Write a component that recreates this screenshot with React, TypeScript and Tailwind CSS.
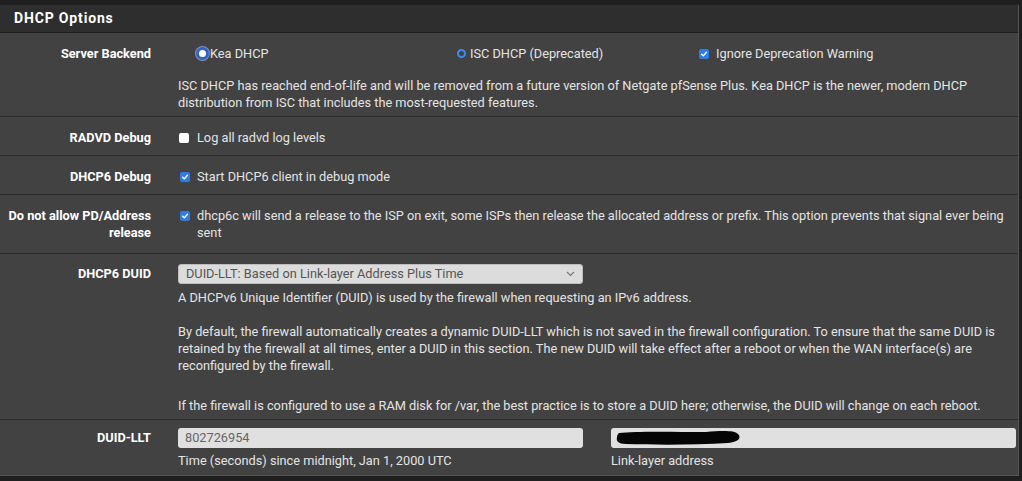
import React from "react";

function Checkbox({ checked }: { checked: boolean }) {
  if (!checked) {
    return <span className="inline-block w-[10px] h-[10px] rounded-[2px] bg-white shrink-0" />;
  }
  return (
    <span className="inline-flex items-center justify-center w-[10px] h-[10px] rounded-[2px] bg-[#2f7de1] shrink-0">
      <svg width="8" height="8" viewBox="0 0 10 10">
        <path d="M2 5.2 L4.2 7.3 L8 2.8" fill="none" stroke="white" strokeWidth="1.7" strokeLinecap="round" strokeLinejoin="round" />
      </svg>
    </span>
  );
}

function Row({ label, children, className }: { label: React.ReactNode; children: React.ReactNode; className: string }) {
  return (
    <div className={`grid grid-cols-[164px_1fr] border-b border-[#2c2c2c] ${className}`}>
      <div className="pr-[13px] text-right font-bold text-white leading-[17px]">{label}</div>
      <div className="pl-[14px] pr-[5px]">{children}</div>
    </div>
  );
}

export default function App() {
  return (
    <div className="w-[1022px] h-[481px] bg-[#1f1f1f] pt-[5px] overflow-hidden" style={{ fontFamily: "Roboto, 'Liberation Sans', sans-serif" }}>
      <div className="w-[1019px] bg-[#424242] border-r border-b border-[#555] text-[12.75px] text-[#e4e4e4]">
        {/* Heading */}
        <div className="h-[28px] bg-[#2e2e2e] border-b border-[#1e1e1e] flex items-center pl-[14px]">
          <span className="text-[14px] font-bold text-white tracking-[0.06em]">DHCP Options</span>
        </div>

        {/* Server Backend */}
        <Row label="Server Backend" className="pt-[12px] pb-[5px]">
          <div className="h-[17px] flex items-center">
            <div className="w-[279px] flex items-center">
              <span className="ml-[18px] w-[13px] h-[13px] rounded-full bg-white border-[3px] border-[#3a63b8] shadow-[0_0_0_1px_#7a93c9]" />
              <span className="ml-[1px]">Kea DHCP</span>
            </div>
            <div className="w-[242px] flex items-center">
              <span className="w-[9px] h-[9px] rounded-full border-[2px] border-[#3d8bf0]" />
              <span className="ml-[4px]">ISC DHCP (Deprecated)</span>
            </div>
            <div className="flex items-center">
              <Checkbox checked />
              <span className="ml-[7px]">Ignore Deprecation Warning</span>
            </div>
          </div>
          <p className="mt-[15px] leading-[17px]">
            ISC DHCP has reached end-of-life and will be removed from a future version of Netgate pfSense Plus. Kea DHCP is the newer, modern DHCP
            <br />
            distribution from ISC that includes the most-requested features.
          </p>
        </Row>

        {/* RADVD Debug */}
        <Row label="RADVD Debug" className="pt-[12px] pb-[9px]">
          <div className="h-[17px] flex items-center pl-[1px]">
            <Checkbox checked={false} />
            <span className="ml-[8px]">Log all radvd log levels</span>
          </div>
        </Row>

        {/* DHCP6 Debug */}
        <Row label="DHCP6 Debug" className="pt-[12px] pb-[9px]">
          <div className="h-[17px] flex items-center pl-[2px]">
            <Checkbox checked />
            <span className="ml-[7px]">Start DHCP6 client in debug mode</span>
          </div>
        </Row>

        {/* PD release */}
        <Row label={<>Do not allow PD/Address<br />release</>} className="pt-[12px] pb-[12px]">
          <div className="flex items-start pl-[2px]">
            <span className="h-[17px] flex items-center">
              <Checkbox checked />
            </span>
            <p className="ml-[7px] leading-[17px]">
              dhcp6c will send a release to the ISP on exit, some ISPs then release the allocated address or prefix. This option prevents that signal ever being
              <br />
              sent
            </p>
          </div>
        </Row>

        {/* DHCP6 DUID */}
        <Row label={<span className="block leading-[20px]">DHCP6 DUID</span>} className="pt-[10px] pb-[5px]">
          <div className="w-[405px] h-[20px] rounded-[3px] bg-[#dcdcdc] border border-[#bdbdbd] flex items-center justify-between px-[7px] text-[#555]">
            <span>DUID-LLT: Based on Link-layer Address Plus Time</span>
            <svg width="9" height="6" viewBox="0 0 9 6">
              <path d="M1 1 L4.5 4.5 L8 1" fill="none" stroke="#777" strokeWidth="1.2" />
            </svg>
          </div>
          <div className="mt-[5px] leading-[17px]">
            <p>A DHCPv6 Unique Identifier (DUID) is used by the firewall when requesting an IPv6 address.</p>
            <p className="mt-[17px]">
              By default, the firewall automatically creates a dynamic DUID-LLT which is not saved in the firewall configuration. To ensure that the same DUID is
              <br />
              retained by the firewall at all times, enter a DUID in this section. The new DUID will take effect after a reboot or when the WAN interface(s) are
              <br />
              reconfigured by the firewall.
            </p>
            <p className="mt-[23px]">
              If the firewall is configured to use a RAM disk for /var, the best practice is to store a DUID here; otherwise, the DUID will change on each reboot.
            </p>
          </div>
        </Row>

        {/* DUID-LLT */}
        <Row label={<span className="block leading-[20px]">DUID-LLT</span>} className="pt-[8px] pb-[6px] border-b-0">
          <div className="grid grid-cols-[405px_405px] gap-x-[28px]">
            <div>
              <div className="h-[20px] rounded-[3px] bg-[#e0e0e0] flex items-center px-[7px] text-[#666]">802726954</div>
              <div className="mt-[4px] leading-[17px]">Time (seconds) since midnight, Jan 1, 2000 UTC</div>
            </div>
            <div>
              <div className="relative h-[20px] rounded-[3px] bg-[#e0e0e0]">
                <svg className="absolute left-[5px] top-[1px]" width="126" height="18" viewBox="0 0 126 18">
                  <path d="M3 4 C20 2 60 3 90 3 C104 2 118 1 122 5 C126 9 122 13 112 14 C80 16 40 16 10 15 C2 15 0 12 1 8 C1 6 2 5 3 4 Z" fill="#050505" />
                </svg>
              </div>
              <div className="mt-[4px] leading-[17px]">Link-layer address</div>
            </div>
          </div>
        </Row>
      </div>
    </div>
  );
}
